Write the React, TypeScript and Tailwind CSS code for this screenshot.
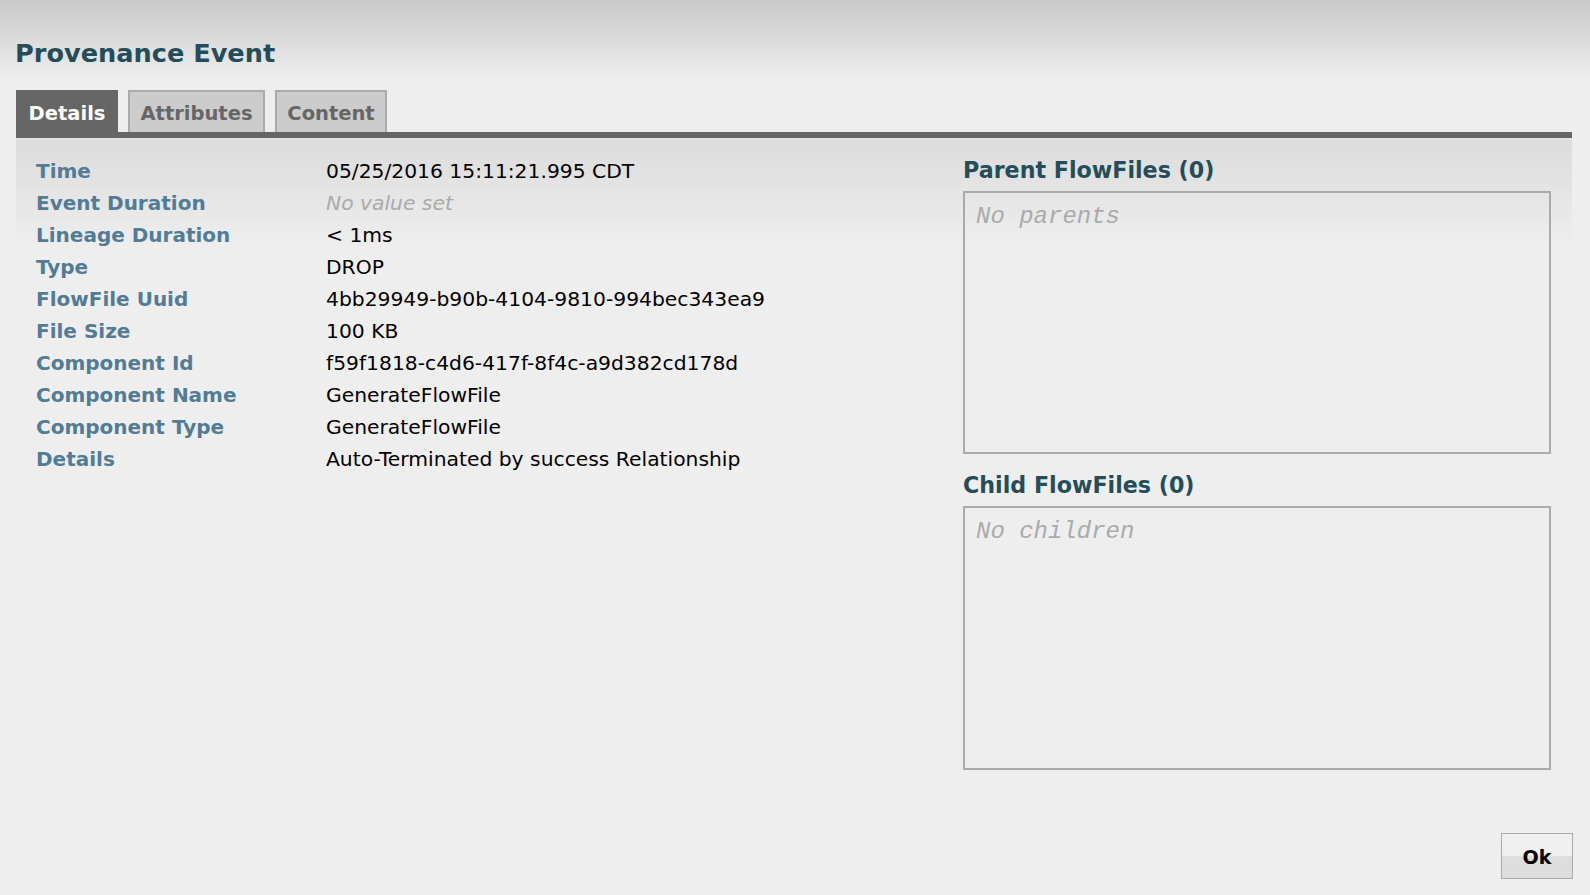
import React from "react";

const rows: [string, string | null][] = [
  ["Time", "05/25/2016 15:11:21.995 CDT"],
  ["Event Duration", null],
  ["Lineage Duration", "< 1ms"],
  ["Type", "DROP"],
  ["FlowFile Uuid", "4bb29949-b90b-4104-9810-994bec343ea9"],
  ["File Size", "100 KB"],
  ["Component Id", "f59f1818-c4d6-417f-8f4c-a9d382cd178d"],
  ["Component Name", "GenerateFlowFile"],
  ["Component Type", "GenerateFlowFile"],
  ["Details", "Auto-Terminated by success Relationship"],
];

function FlowBox({ title, empty, boxClass }: { title: string; empty: string; boxClass: string }) {
  return (
    <div className="flex flex-col">
      <div className="pt-[1px] text-[22.2px] leading-[28px] font-bold text-[#244d59]">{title}</div>
      <div className={`mt-[7px] border-2 border-[#aaaaaa] pl-[11px] pt-[10px] ${boxClass}`}>
        <div className="font-['Liberation_Mono',monospace] italic text-[24px] leading-[28px] text-[#aaaaaa]">
          {empty}
        </div>
      </div>
    </div>
  );
}

export default function App() {
  return (
    <div className="relative flex h-[895px] w-full flex-col overflow-hidden bg-[#eeeeee] bg-[linear-gradient(to_bottom,#c9c9c9_0px,#eeeeee_80px)] font-['DejaVu_Sans',sans-serif]">
      <div className="pl-[15px] pt-[38px]">
        <h1 className="text-[25.6px] leading-[30px] font-bold text-[#244d59]">Provenance Event</h1>
      </div>

      <div className="ml-[16px] mr-[18px] mt-[22px] flex flex-1 flex-col">
        <div className="flex h-[42px] items-end gap-[10px]">
          <div className="h-[42px] w-[102px] bg-[#666666] pt-[5px] text-center text-[19.5px] leading-[37px] font-bold text-white">
            Details
          </div>
          <div className="h-[42px] w-[137px] border-2 border-b-0 border-[#aaaaaa] bg-[#cccccc] pt-[3px] text-center text-[19.5px] leading-[37px] font-bold text-[#666666]">
            Attributes
          </div>
          <div className="h-[42px] w-[112px] border-2 border-b-0 border-[#aaaaaa] bg-[#cccccc] pt-[3px] text-center text-[19.5px] leading-[37px] font-bold text-[#666666]">
            Content
          </div>
        </div>
        <div className="h-[6px] bg-[#666666]" />
        <div className="flex flex-1 bg-[linear-gradient(to_bottom,#e6e6e6_0px,#dcdcdc_3px,#eeeeee_110px)] pl-[20px] pt-[17px]">
          <div className="w-[927px]">
            {rows.map(([label, value]) => (
              <div key={label} className="flex h-[32px] leading-[32px]">
                <div className="w-[290px] text-[20px] font-bold text-[#527b95]">{label}</div>
                {value === null ? (
                  <div className="text-[20.3px] italic text-[#aaaaaa]">No value set</div>
                ) : (
                  <div className="text-[20.3px] text-black">{value}</div>
                )}
              </div>
            ))}
          </div>
          <div className="flex w-[588px] flex-col gap-[16px]">
            <FlowBox title="Parent FlowFiles (0)" empty="No parents" boxClass="h-[263px]" />
            <FlowBox title="Child FlowFiles (0)" empty="No children" boxClass="h-[264px]" />
          </div>
        </div>
      </div>

      <div className="flex justify-end pb-[16px] pr-[17px]">
        <button className="h-[46px] w-[72px] border border-[#aaaaaa] bg-[linear-gradient(to_bottom,#f0f0f0_0%,#f0f0f0_48%,#dddddd_52%,#dddddd_100%)] pt-[2px] text-[19px] font-bold text-black">
          Ok
        </button>
      </div>
    </div>
  );
}
